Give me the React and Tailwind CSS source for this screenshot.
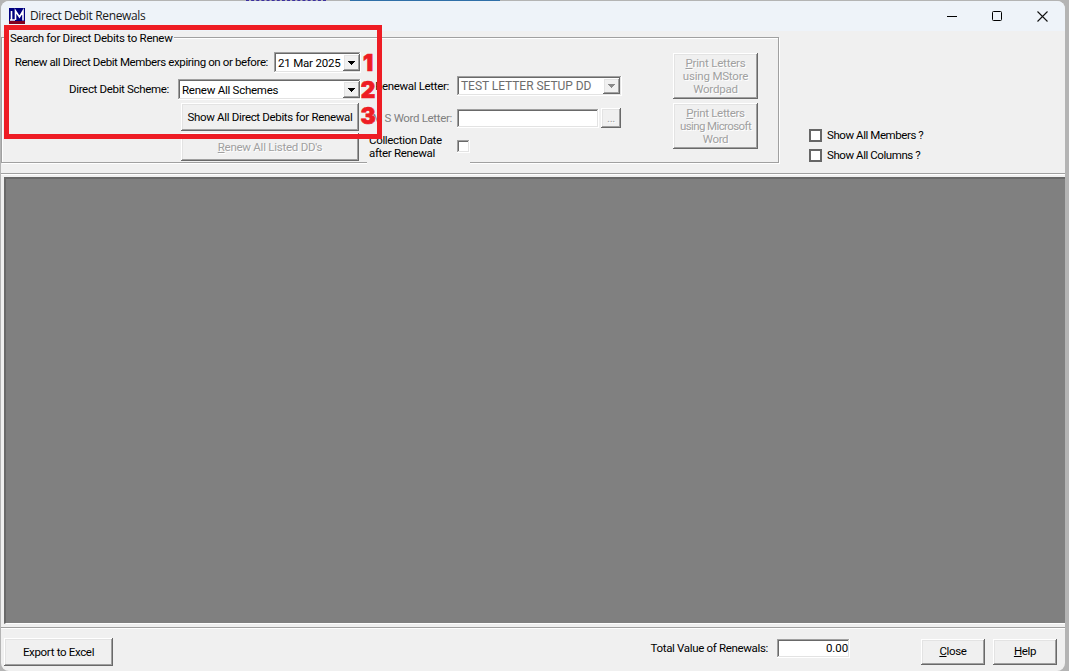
import React from "react";
import clsx from "clsx";

const raised =
  "bg-[#f0f0f0] shadow-[inset_-1px_-1px_0_#696969,inset_1px_1px_0_#ffffff,inset_-2px_-2px_0_#a0a0a0,inset_2px_2px_0_#e3e3e3]";
const sunken =
  "bg-white shadow-[inset_-1px_-1px_0_#ffffff,inset_1px_1px_0_#a0a0a0,inset_-2px_-2px_0_#e3e3e3,inset_2px_2px_0_#696969]";

function Button({ className, disabled, children }) {
  return (
    <button
      disabled={disabled}
      className={clsx(
        "flex shrink-0 items-center justify-center whitespace-nowrap leading-[13px]",
        raised,
        disabled && "text-[#a0a0a0] [text-shadow:1px_1px_0_#ffffff]",
        className
      )}
    >
      <span>{children}</span>
    </button>
  );
}

function Combo({ className, disabled, children }) {
  return (
    <div
      className={clsx(
        "flex shrink-0 items-center justify-between whitespace-nowrap py-0.5 pl-0.5",
        sunken,
        disabled ? "pr-0.5 text-[#6d6d6d]" : "pr-px",
        className
      )}
    >
      <span className="pt-px pl-0.5">{children}</span>
      <span className={clsx("flex h-full w-[17px] items-center justify-center", raised)}>
        <svg width="7" height="4" viewBox="0 0 7 4" shapeRendering="crispEdges">
          <path d="M0 0h7L3.5 4z" fill={disabled ? "#8a8a8a" : "#000"} />
        </svg>
      </span>
    </div>
  );
}

function CheckOption({ children }) {
  return (
    <label className="flex h-[13px] items-center gap-[5px] whitespace-nowrap tracking-[-0.43px]">
      <span className="size-[13px] border-2 border-[#666] bg-white" />
      {children}
    </label>
  );
}

function TitleBar() {
  return (
    <div className="flex h-[30px] shrink-0 items-center bg-[#eef3f9] pl-2">
      <svg width="16" height="16" viewBox="0 0 16 16">
        <rect width="16" height="16" fill="#000080" />
        <path d="M0 13h16v3H0z" fill="#800020" />
        <path d="M2.500 3v9M1 12h5M6.500 12V3l4 6 3.500-6v9.500" fill="none" stroke="#fff" strokeWidth="1.600" />
      </svg>
      <span className="ml-[5px] -mt-px font-['Open_Sans'] text-[12px] tracking-[-0.35px] text-[#1a1a1a]">
        Direct Debit Renewals
      </span>
      <div className="ml-auto flex items-center gap-[35px] pr-[17px]">
        <svg width="10" height="10" viewBox="0 0 10 10" stroke="#000" shapeRendering="crispEdges">
          <path d="M0 5.500h10" />
        </svg>
        <svg width="10" height="10" viewBox="0 0 10 10" fill="none" stroke="#000">
          <rect x=".5" y=".5" width="9" height="9" rx="1" />
        </svg>
        <svg width="11" height="11" viewBox="0 0 11 11" stroke="#111" strokeWidth="1.100">
          <path d="M.5.5l10 10M10.500.5l-10 10" />
        </svg>
      </div>
    </div>
  );
}

function SearchColumn() {
  return (
    <div className="flex w-[359px] flex-col items-end">
      <div className="flex h-[21px] items-center gap-[6px] whitespace-nowrap">
        <span className="tracking-[-0.39px]">Renew all Direct Debit Members expiring on or before:</span>
        <Combo className="h-[21px] w-[87px] tracking-[-0.2px]">21 Mar 2025</Combo>
      </div>
      <div className="mt-[6px] flex h-[21px] items-center gap-[9px] whitespace-nowrap">
        <span>Direct Debit Scheme:</span>
        <Combo className="h-[21px] w-[183px] tracking-[-0.25px]">Renew All Schemes</Combo>
      </div>
      <Button className="mt-[3px] mr-[2px] h-7 w-[178px]">Show All Direct Debits for Renewal</Button>
      <Button disabled className="mt-[2px] mr-[2px] h-7 w-[178px] tracking-[-0.25px]">
        <u>R</u>enew All Listed DD's
      </Button>
    </div>
  );
}

function LetterColumn() {
  return (
    <div className="ml-[6px] flex w-[255px] flex-col pt-6">
      <div className="flex h-5 items-center whitespace-nowrap">
        <span className="flex w-[82px] justify-end">Renewal Letter:</span>
        <Combo disabled className="ml-2 h-5 w-[165px] text-[12px] tracking-[-0.05px]">
          TEST LETTER SETUP DD
        </Combo>
      </div>
      <div className="mt-3 flex h-5 items-center whitespace-nowrap">
        <span className="flex w-[85px] justify-end text-[#808080]">M S Word Letter:</span>
        <div className={clsx("ml-[5px] h-[19px] w-[142px]", sunken)} />
        <Button disabled className="ml-[2px] h-5 w-5">...</Button>
      </div>
      <div className="mt-[6px] flex h-[31px] w-[103px] gap-[15px] bg-[#f0f0f0] pl-[2px]">
        <span className="w-[73px] whitespace-nowrap leading-[13px]">
          Collection Date
          <br />
          after Renewal
        </span>
        <div className={clsx("mt-[6px] size-[13px] shrink-0", sunken)} />
      </div>
    </div>
  );
}

function Annotation() {
  return (
    <>
      <div className="absolute top-[25px] left-1 h-[114px] w-[378px] border-5 border-[#ee1c24]" />
      <div className="absolute top-[50px] left-[360px] flex w-4 flex-col items-center font-['Inter'] text-[22.500px] leading-[26.500px] font-black tracking-normal text-[#ee1c24] [-webkit-text-stroke:0.7px_#ee1c24]">
        <span>1</span>
        <span>2</span>
        <span>3</span>
      </div>
    </>
  );
}

export default function App() {
  return (
    <div className="relative h-[671px] w-[1069px] overflow-hidden bg-[#b4b4b4] pr-1 pl-px font-['Roboto','Liberation_Sans',sans-serif] text-[11.500px] leading-[13px] tracking-[-0.33px] text-black">
      {/* sliver of the window behind */}
      <div className="flex h-px pl-[245px]">
        <span className="w-[80px] border-t border-dashed border-[#3c2fa0]" />
        <span className="ml-6 w-[150px] bg-[#2f6fa8]" />
      </div>
      <div className="flex h-[670px] flex-col overflow-hidden rounded-lg bg-[#f0f0f0]">
        <TitleBar />
        <header className="flex h-[142px] shrink-0 pt-[6px]">
          <div className="h-[126px] w-[778px] shrink-0 border border-[#a0a0a0] shadow-[1px_1px_0_#fff,inset_1px_1px_0_#fff]">
            <div className="-mt-[6px] ml-[7px] h-[13px] w-fit bg-[#f0f0f0] px-px tracking-[-0.26px] whitespace-nowrap">
              Search for Direct Debits to Renew
            </div>
            <div className="flex pt-[7px]">
              <SearchColumn />
              <LetterColumn />
              <div className="ml-[51px] flex flex-col gap-1 pt-px">
                <Button disabled className="h-[46px] w-[85px] tracking-[-0.2px]">
                  <u>P</u>rint Letters
                  <br />
                  using MStore
                  <br />
                  Wordpad
                </Button>
                <Button disabled className="h-[46px] w-[85px]">
                  <u>P</u>rint Letters
                  <br />
                  <span className="tracking-[-0.6px]">using Microsoft</span>
                  <br />
                  Word
                </Button>
              </div>
            </div>
          </div>
          <div className="ml-[30px] flex flex-col gap-[7px] pt-[92px]">
            <CheckOption>Show All Members ?</CheckOption>
            <CheckOption>Show All Columns ?</CheckOption>
          </div>
        </header>
        <main className="h-[455px] shrink-0 border-y border-[#a0a0a0] pt-[3px] pb-[3px] pl-[3px] shadow-[inset_0_1px_0_#fff,0_1px_0_#fff]">
          <div className="h-full border-t-2 border-b border-l-2 border-t-[#696969] border-b-white border-l-[#696969] bg-[#808080]" />
        </main>
        <footer className="flex flex-1 items-start pt-[9px] pr-2 pl-[3px]">
          <Button className="mt-px h-7 w-[109px]">Export to Excel</Button>
          <div className="mt-[2px] ml-auto flex h-[19px] items-center gap-[9px] whitespace-nowrap">
            <span>Total Value of Renewals:</span>
            <div className={clsx("flex h-[19px] w-[73px] items-center justify-end pr-[2px] tracking-[-0.1px]", sunken)}>
              0.00
            </div>
          </div>
          <Button className="mt-[2px] ml-[71px] h-[26px] w-16 pb-px">
            <u>C</u>lose
          </Button>
          <Button className="mt-[2px] ml-2 h-[26px] w-16 pb-px">
            <u>H</u>elp
          </Button>
        </footer>
      </div>
      <Annotation />
    </div>
  );
}
